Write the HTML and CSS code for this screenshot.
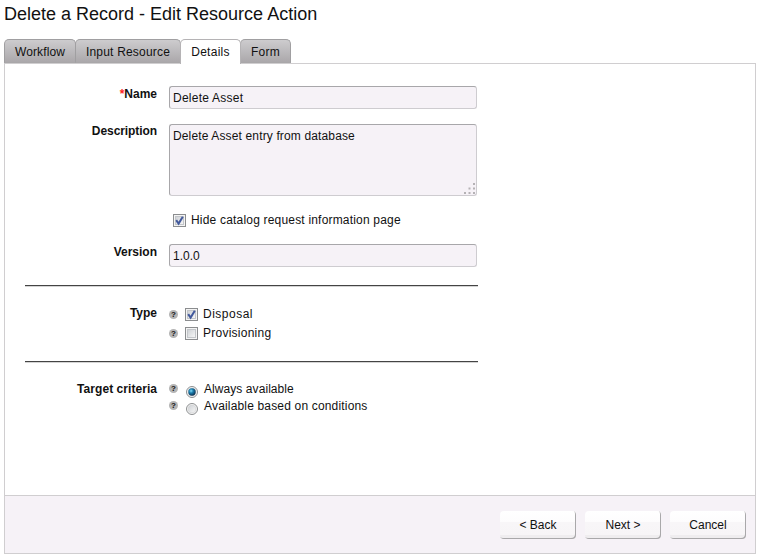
FILE: index.html
```html
<!DOCTYPE html>
<html lang="en">
<head>
<meta charset="utf-8">
<title>Delete a Record - Edit Resource Action</title>
<link rel="stylesheet" href="styles.css">
</head>
<body>
<svg width="0" height="0" class="defs" aria-hidden="true">
  <defs>
    <linearGradient id="boxFill" x1="0" y1="0" x2="1" y2="1"><stop offset="0" stop-color="#cdd0d4"/><stop offset="1" stop-color="#f8f8f8"/></linearGradient>
    <radialGradient id="dotFill" cx=".38" cy=".35" r=".7"><stop offset="0" stop-color="#7fdcf8"/><stop offset=".4" stop-color="#1a7dad"/><stop offset="1" stop-color="#0b2a48"/></radialGradient>
    <g id="box"><rect x=".5" y=".5" width="12" height="12" fill="#f4f4f4" stroke="#8b8d8f"/><rect x="2.5" y="2.5" width="8" height="8" fill="url(#boxFill)" stroke="#c3c6ca"/></g>
    <path id="tick" d="M3.2 6.2 5.6 9.6 9.8 2.8" fill="none" stroke="#42599c" stroke-width="2"/>
    <g id="ring"><circle cx="6" cy="6" r="5.5" fill="#f7f7f7" stroke="#8d8f91"/><circle cx="6" cy="6" r="3.9" fill="url(#boxFill)" stroke="#d2d4d6" stroke-width=".7"/></g>
  </defs>
</svg>
<h1 class="title">Delete a Record - Edit Resource Action</h1>
<nav class="tabs">
  <a class="tab tab-workflow"><span>Workflow</span></a>
  <a class="tab tab-input"><span>Input Resource</span></a>
  <a class="tab tab-details active"><span>Details</span></a>
  <a class="tab tab-form"><span>Form</span></a>
</nav>
<main class="panel">
  <form class="form">
    <div class="row">
      <label class="label"><span class="required">*</span>Name</label>
      <div class="field"><span class="t-name">Delete Asset</span></div>
    </div>
    <div class="row row-description">
      <label class="label l-description">Description</label>
      <div class="field area"><span class="t-description">Delete Asset entry from database</span>
        <svg class="grip" width="12" height="12"><path d="M10 0h2v2h-2zM5.5 4.5h2v2h-2zM10 4.5h2v2h-2zM1 9h2v2h-2zM5.5 9h2v2h-2zM10 9h2v2h-2z" fill="#b5b2b5"/></svg>
      </div>
    </div>
    <div class="row row-hide">
      <span></span>
      <div class="check"><svg width="13" height="13"><use href="#box"/><use href="#tick"/></svg><span class="t-hide">Hide catalog request information page</span></div>
    </div>
    <div class="row row-version">
      <label class="label">Version</label>
      <div class="field"><span class="t-version">1.0.0</span></div>
    </div>
    <hr class="rule">
    <div class="row row-type">
      <label class="label">Type</label>
      <div class="options">
        <div class="option"><i class="help">?</i><svg width="13" height="13"><use href="#box"/><use href="#tick"/></svg><span class="t-disposal">Disposal</span></div>
        <div class="option"><i class="help">?</i><svg width="13" height="13"><use href="#box"/></svg><span class="t-provisioning">Provisioning</span></div>
      </div>
    </div>
    <hr class="rule">
    <div class="row row-target">
      <label class="label l-target">Target criteria</label>
      <div class="options radios">
        <div class="option"><i class="help">?</i><svg width="12" height="12"><use href="#ring"/><circle cx="6" cy="6" r="3.7" fill="url(#dotFill)"/></svg><span class="t-always">Always available</span></div>
        <div class="option"><i class="help">?</i><svg width="12" height="12"><use href="#ring"/></svg><span class="t-based">Available based on conditions</span></div>
      </div>
    </div>
  </form>
  <footer class="footer">
    <button class="btn">&lt; Back</button>
    <button class="btn">Next &gt;</button>
    <button class="btn">Cancel</button>
  </footer>
</main>
</body>
</html>
```
FILE: styles.css
```css
* { box-sizing: border-box; }
body {
  margin: 0;
  background: #fff;
  color: #111;
  font: 12px/14px Arial, "Liberation Sans", sans-serif;
}
.defs { position: absolute; }
svg { display: block; flex: none; }
.title {
  margin: 0;
  padding: 3px 0 0 4px;
  height: 39px;
  font-size: 18px;
  line-height: 22px;
  font-weight: normal;
  white-space: nowrap;
}
.tabs { display: flex; height: 24px; padding-left: 4px; }
.tab {
  display: flex;
  align-items: center;
  justify-content: center;
  height: 24px;
  padding-top: 1px;
  border: 1px solid #a09fa1;
  border-bottom-color: #a9a7a9;
  border-radius: 5px 5px 0 0;
  background: linear-gradient(#cdccce, #aba8ab);
  white-space: nowrap;
}
.tab + .tab { margin-left: -1px; }
.tab-workflow { width: 72px; letter-spacing: .12px; }
.tab-input { width: 106px; letter-spacing: .2px; }
.tab-details { width: 61px; letter-spacing: .25px; }
.tab-form { width: 51px; letter-spacing: .2px; }
.tab.active {
  height: 25px;
  padding-bottom: 1px;
  position: relative;
  background: #fff;
  border-color: #b5b3b5;
  border-bottom: 0;
}
.panel {
  display: flex;
  flex-direction: column;
  width: 752px;
  height: 491px;
  margin-left: 4px;
  border: 1px solid #d0ced0;
}
.form { flex: 1; padding: 22px 0 0 20px; }
.row {
  display: grid;
  grid-template-columns: 132px 308px;
  column-gap: 12px;
  align-items: start;
}
.label { padding-top: 1px; text-align: right; font-weight: bold; white-space: nowrap; }
.l-description { letter-spacing: -.08px; }
.l-target { letter-spacing: .05px; }
.required { color: #f22; }
.field {
  display: flex;
  align-items: center;
  height: 23px;
  padding: 1px 0 0 3px;
  border: 1px solid #a8a7aa;
  border-right-color: #ceccd0;
  border-bottom-color: #ceccd0;
  border-radius: 3px;
  background: #f6f2f7;
}
.t-name { letter-spacing: .25px; }
.t-description { letter-spacing: .14px; }
.t-hide { letter-spacing: .19px; }
.t-disposal { letter-spacing: .5px; }
.t-provisioning { letter-spacing: .25px; }
.t-always { letter-spacing: .07px; }
.t-based { letter-spacing: .17px; }
.row-description { margin-top: 15px; }
.row-description .label { padding-top: 0; }
.area { position: relative; height: 72px; align-items: flex-start; padding-top: 4px; }
.grip { position: absolute; right: 1px; bottom: 0; }
.row-hide { margin-top: 17px; }
.check { display: flex; align-items: center; height: 14px; padding-left: 4px; gap: 5px; white-space: nowrap; }
.row-version { margin-top: 17px; }
.rule { width: 453px; height: 2px; margin: 18px 0 0; border: 0; border-top: 1px solid #444; background: #d4d4d4; }
.row-type { margin-top: 18px; }
.row-type .option { padding-bottom: 1px; }
.row-type .option svg { margin-top: 1px; }
.option { display: flex; align-items: center; height: 19px; white-space: nowrap; }
.help {
  width: 9px;
  height: 9px;
  margin-right: 7px;
  border-radius: 50%;
  background: #b4b4b4;
  color: #111;
  text-align: center;
  font: bold 8px/9px Arial, "Liberation Sans", sans-serif;
}
.option svg { margin-right: 5px; }
.row-target { margin-top: 17px; }
.row-target .label { padding-top: 2px; }
.radios .option { height: 17px; }
.radios svg { margin: 6px 6px 0 1px; }
.footer {
  display: flex;
  justify-content: flex-end;
  gap: 9px;
  height: 58px;
  padding: 15px 9px 0 0;
  border-top: 1px solid #d0ced0;
  background: #f6f2f7;
}
.btn {
  width: 76px;
  height: 28px;
  padding: 0;
  border: 0;
  border-radius: 4px;
  background: linear-gradient(#fff 0, #fdfcfd 40%, #f8f6f8 40%, #f7f5f7 86%, #efedef 87%);
  box-shadow: inset -1px -1px 0 #a9a8aa;
  color: #111;
  font: inherit;
}
```
